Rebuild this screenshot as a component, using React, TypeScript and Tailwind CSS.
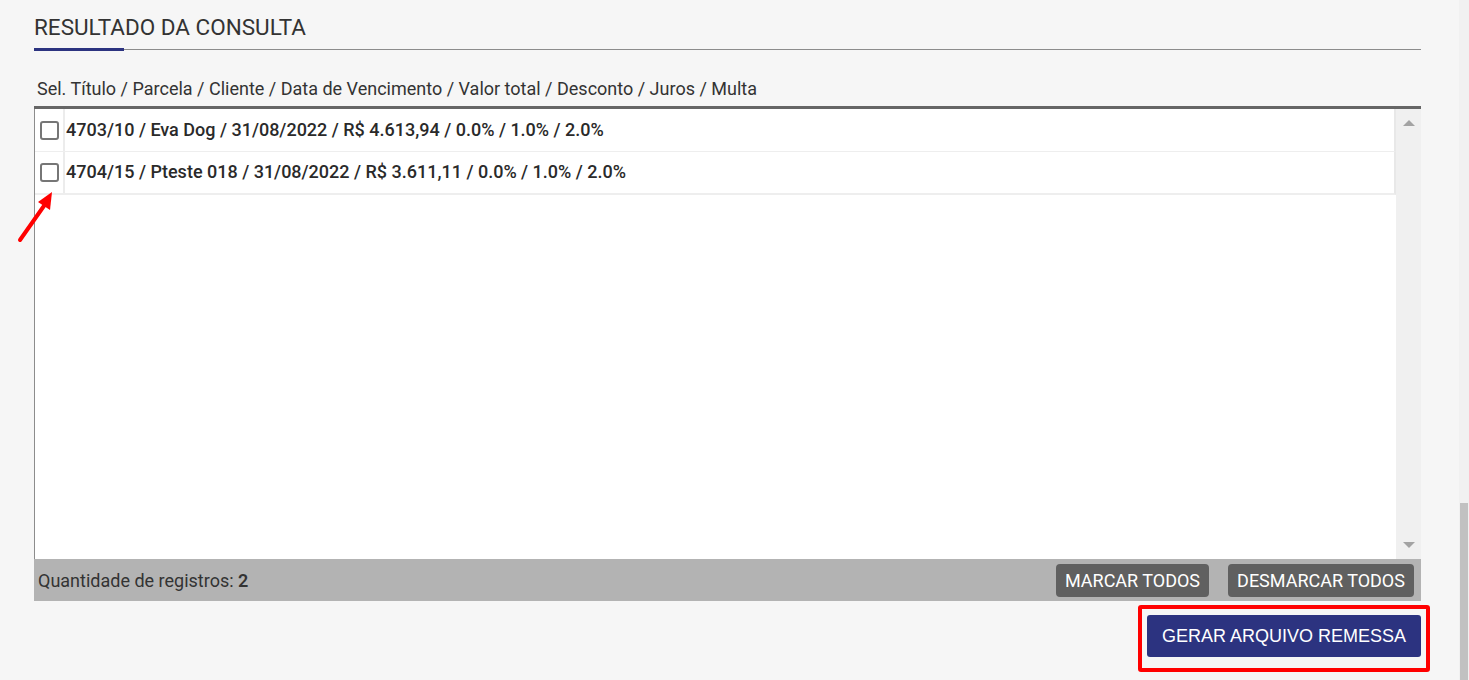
import React from 'react';

const rows = [
  { id: 1, label: '4703/10 / Eva Dog / 31/08/2022 / R$ 4.613,94 / 0.0% / 1.0% / 2.0%' },
  { id: 2, label: '4704/15 / Pteste 018 / 31/08/2022 / R$ 3.611,11 / 0.0% / 1.0% / 2.0%' },
];

function Checkbox() {
  return <span className="block w-[19px] h-[19px] rounded-[3px] border-2 border-[#767676] bg-white" />;
}

export default function App() {
  return (
    <div className="flex w-[1469px] h-[680px] overflow-hidden bg-[#f6f6f6] text-[#333] font-['Roboto',sans-serif]">
      <div className="flex-1 pl-[34px] pr-[38px] pt-[12px] flex flex-col">
        {/* Title */}
        <h2 className="text-[22.5px] leading-[30px]">RESULTADO DA CONSULTA</h2>
        <div className="relative mt-[7px] h-px bg-[#8c8c8c]">
          <div className="absolute left-0 -top-[1px] w-[90px] h-[3px] bg-[#2c3380]" />
        </div>

        <p className="mt-[27px] pl-[3px] text-[18px] leading-[24px]">
          Sel. Título / Parcela / Cliente / Data de Vencimento / Valor total / Desconto / Juros / Multa
        </p>

        {/* List box */}
        <div className="mt-[5px] border-t-[3px] border-[#666] flex h-[453px]">
          <div className="flex-1 bg-white border-l border-[#8c8c8c] flex flex-col">
            {rows.map((r, i) => (
              <div
                key={r.id}
                className={`flex h-[43px] border-r-[2px] border-[#e8e8e8] ${i === rows.length - 1 ? 'border-b-[2px]' : 'border-b'} border-b-[#eeeeee]`}
              >
                <div className="w-[30px] flex items-center justify-center border-r-[2px] border-[#ececec]">
                  <Checkbox />
                </div>
                <div className="flex items-center pl-[1px] pb-[2px] text-[18px] font-medium text-[#2a2a2a]">{r.label}</div>
              </div>
            ))}
          </div>
          {/* scrollbar */}
          <div className="w-[25px] bg-[#f0f0f0] flex flex-col items-center justify-between py-[11px]">
            <span className="block w-0 h-0 border-l-[6px] border-r-[6px] border-b-[6px] border-l-transparent border-r-transparent border-b-[#a3a3a3]" />
            <span className="block w-0 h-0 border-l-[6px] border-r-[6px] border-t-[6px] border-l-transparent border-r-transparent border-t-[#a3a3a3]" />
          </div>
        </div>

        {/* Footer */}
        <div className="h-[42px] bg-[#b3b3b3] flex items-center justify-between pl-[4px] pr-[7px]">
          <span className="text-[18px]">
            Quantidade de registros: <b className="font-semibold">2</b>
          </span>
          <div className="flex gap-[19px]">
            <button className="h-[33px] w-[153px] rounded-[4px] bg-[#606060] text-white text-[18px]">MARCAR TODOS</button>
            <button className="h-[33px] w-[186px] rounded-[4px] bg-[#606060] text-white text-[18px]">DESMARCAR TODOS</button>
          </div>
        </div>

        <div className="flex justify-end mt-[4px] -mr-[9px]">
          <div className="border-[4px] border-[#ff0000] rounded-[3px] pt-[6px] pb-[11px] pl-[5px] pr-[5px]">
            <button className="h-[42px] w-[274px] rounded-[3px] bg-[#2c3380] text-white text-[18px] font-['Liberation_Sans',Arial,sans-serif]">
              GERAR ARQUIVO REMESSA
            </button>
          </div>
        </div>
      </div>

      {/* page scrollbar */}
      <div className="w-[10px] bg-[#f1f1f1] flex flex-col">
        <div className="mt-[503px] flex-1 mx-[1px] bg-[#c1c1c1]" />
      </div>

      {/* red arrow annotation */}
      <svg className="absolute left-[14px] top-[186px]" width="46" height="60" viewBox="0 0 46 60">
        <line x1="6" y1="54" x2="32" y2="17" stroke="#ff0000" strokeWidth="4" strokeLinecap="round" />
        <polygon points="38,6 24,16 36,24" fill="#ff0000" />
      </svg>
    </div>
  );
}
